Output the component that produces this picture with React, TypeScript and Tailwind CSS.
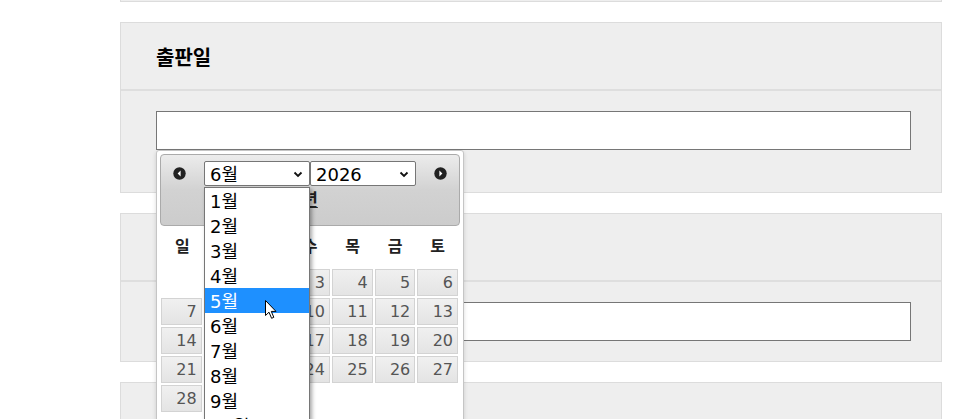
import React from "react";

const FONT = "font-['DejaVu_Sans','Noto_Sans_CJK_KR',sans-serif]";

const MONTHS = ["1월", "2월", "3월", "4월", "5월", "6월", "7월", "8월", "9월", "10월"];
const WEEKDAYS = ["일", "월", "화", "수", "목", "금", "토"];

// June 2026 starts on a Monday
const DAYS: (number | null)[] = [
  null, 1, 2, 3, 4, 5, 6,
  7, 8, 9, 10, 11, 12, 13,
  14, 15, 16, 17, 18, 19, 20,
  21, 22, 23, 24, 25, 26, 27,
  28, 29, 30, null, null, null, null,
];

function NavIcon({ dir }: { dir: "prev" | "next" }) {
  return (
    <svg width="13" height="13" viewBox="0 0 13 13">
      <circle cx="6.5" cy="6.5" r="6.2" fill="#222" />
      {dir === "prev" ? (
        <path d="M7.6 3.6 L4.6 6.5 L7.6 9.4 Z" fill="#fff" />
      ) : (
        <path d="M5.4 3.6 L8.4 6.5 L5.4 9.4 Z" fill="#fff" />
      )}
    </svg>
  );
}

function Chevron() {
  return (
    <svg width="10" height="7" viewBox="0 0 10 7">
      <path d="M1.5 1.5 L5 5 L8.5 1.5" fill="none" stroke="#111" strokeWidth="1.8" />
    </svg>
  );
}

function FakeSelect({ value }: { value: string }) {
  return (
    <div className="flex h-[25px] w-[106px] items-center justify-between rounded-[2px] border border-[#767676] bg-white pl-[5px] pr-[6px] pt-[2px] text-[18px] leading-none text-black">
      <span>{value}</span>
      <Chevron />
    </div>
  );
}

export default function App() {
  return (
    <div className={`relative h-[419px] w-[962px] overflow-hidden bg-white ${FONT}`}>
      <div className="ml-[120px] w-[822px]">
        <div className="h-[2px] border-x border-b border-[#dcdcdc] bg-[#eeeeee]" />

        {/* 출판일 */}
        <div className="mt-[20px] border border-[#dcdcdc] bg-[#eeeeee]">
          <div className="flex h-[68px] items-center border-b-2 border-[#dedede] pl-[35px] pt-[4px]">
            <h2 className="text-[20px] font-bold text-black">출판일</h2>
          </div>
          <div className="pb-[42px] pl-[35px] pr-[30px] pt-[20px]">
            <div className="h-[39px] border border-[#767676] bg-white" />
          </div>
        </div>

        <div className="mt-[20px] border border-[#dcdcdc] bg-[#eeeeee]">
          <div className="h-[68px] border-b-2 border-[#dedede]" />
          <div className="pb-[20px] pl-[35px] pr-[30px] pt-[20px]">
            <div className="h-[39px] border border-[#767676] bg-white" />
          </div>
        </div>

        <div className="mt-[20px] h-[60px] border border-[#dcdcdc] bg-[#eeeeee]" />
      </div>

      {/* datepicker popup */}
      <div className="absolute left-[156px] top-[150px] h-[280px] w-[308px] rounded-[3px] border border-[#c5c5c5] bg-white p-[3px] shadow-[0_2px_4px_rgba(0,0,0,0.15)]">
        <div className="h-[72px] rounded-[4px] border border-[#aaaaaa] bg-gradient-to-b from-[#ececec] via-[#d2d2d2] to-[#cccccc]">
          <div className="mt-[6px] flex items-center justify-between px-[12px]">
            <NavIcon dir="prev" />
            <div className="flex">
              <FakeSelect value="6월" />
              <FakeSelect value="2026" />
            </div>
            <NavIcon dir="next" />
          </div>
          <div className="mt-[4px] text-center text-[17px] font-bold leading-[20px] text-[#222] underline">년</div>
        </div>

        <div className="mt-[1px] grid h-[40px] grid-cols-7 items-center px-[1px] text-center text-[16px] font-bold text-[#222]">
          {WEEKDAYS.map((d) => (
            <span key={d}>{d}</span>
          ))}
        </div>

        <div className="mt-[2px] grid w-[299px] grid-cols-7 gap-x-[2px] gap-y-[2px] px-[1px]">
          {DAYS.map((d, i) =>
            d === null ? (
              <div key={i} className="h-[27px]" />
            ) : (
              <div
                key={i}
                className="flex h-[27px] items-center justify-end border border-[#d3d3d3] bg-gradient-to-b from-[#f0f0f0] to-[#e4e4e4] pr-[4px] pt-[1px] text-[16px] text-[#555555]"
              >
                {d}
              </div>
            )
          )}
        </div>
      </div>

      {/* open month listbox */}
      <div className="absolute left-[204px] top-[187px] w-[106px] border border-[#767676] bg-white shadow-[2px_2px_4px_rgba(0,0,0,0.35)]">
        {MONTHS.map((m) => (
          <div
            key={m}
            className={`flex h-[25px] items-center pl-[5px] pt-[1px] text-[18px] ${
              m === "5월" ? "bg-[#1e90ff] text-white" : "text-black"
            }`}
          >
            {m}
          </div>
        ))}
      </div>

      {/* mouse pointer */}
      <svg className="absolute left-[265px] top-[300px]" width="13" height="20" viewBox="0 0 13 20">
        <path
          d="M0.5 0.5 L0.5 15.5 L4 12.2 L6.6 18.3 L8.8 17.3 L6.3 11.4 L11 11.4 Z"
          fill="#fff"
          stroke="#000"
          strokeWidth="1"
          strokeLinejoin="round"
        />
      </svg>
    </div>
  );
}
